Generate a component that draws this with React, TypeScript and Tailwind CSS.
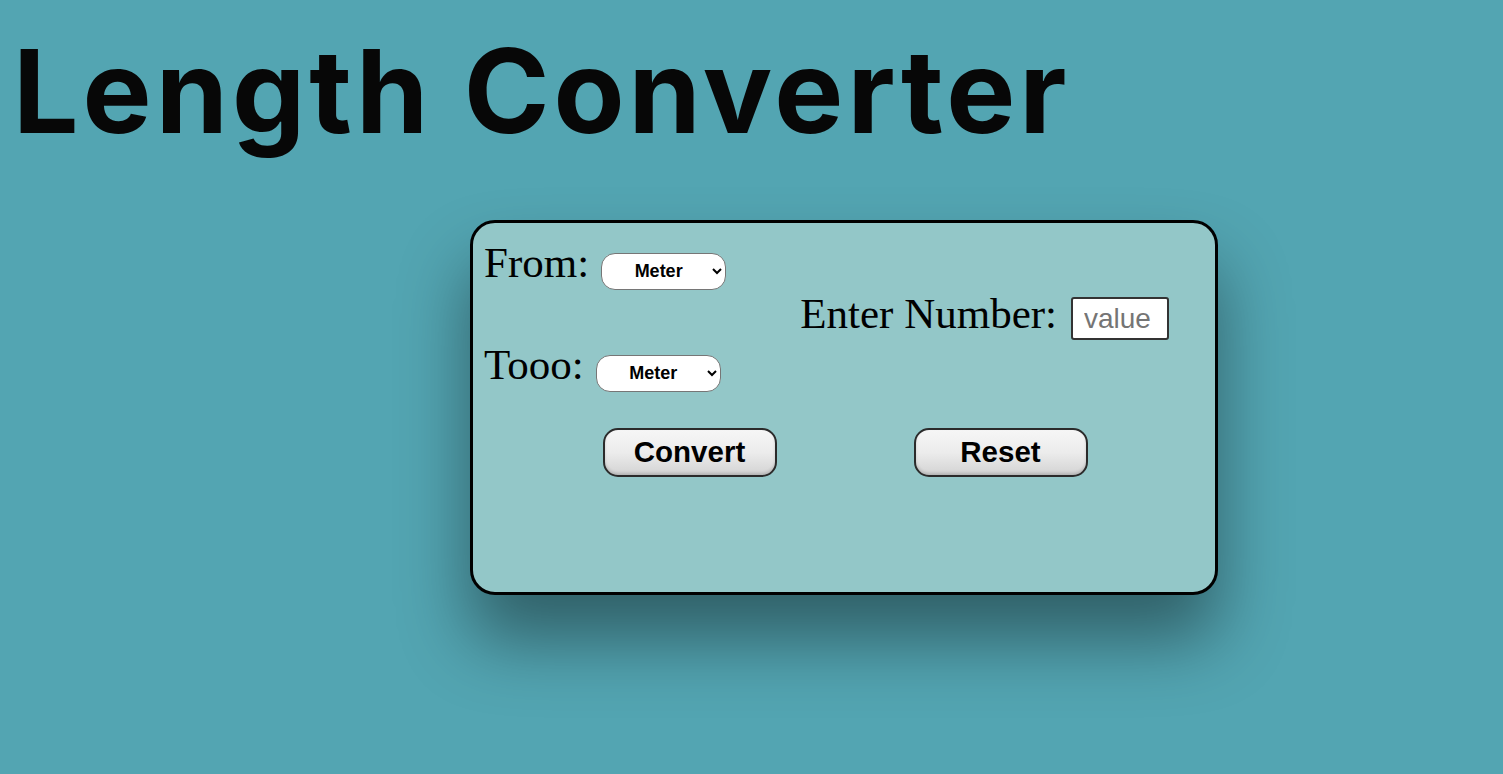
import { useState } from 'react';

const units = ['Meter', 'Kilometer', 'Centimeter', 'Millimeter', 'Mile', 'Yard', 'Foot', 'Inch'];

export default function App() {
    const [from, setFrom] = useState('Meter');
    const [to, setTo] = useState('Meter');
    const [value, setValue] = useState('');

    const selectClass =
        "ml-[12px] h-[37px] w-[125px] rounded-[14px] border border-[#767676] bg-white pl-[2px] text-center text-[18px] font-bold text-black [font-family:'Liberation_Sans',Arial,sans-serif]";
    const buttonClass =
        "h-[49px] w-[174px] rounded-[15px] border-2 border-[#2b2b2b] bg-gradient-to-b from-[#f6f6f6] via-[#ececec] to-[#d3d3d3] text-[29.5px] font-bold text-black shadow-[inset_0_-2px_3px_rgba(0,0,0,0.15)] [font-family:'Liberation_Sans',Arial,sans-serif]";

    return (
        <div className="min-h-screen bg-[#53a5b2]">
            {/* Title */}
            <h1 className="m-0 pt-[33px] pl-[13px] text-[116px] font-bold leading-none tracking-[4px] text-[#070707] [font-family:Inter,sans-serif]">
                Length Converter
            </h1>

            {/* Converter card */}
            <div className="mt-[71px] ml-[470px] h-[375px] w-[748px] rounded-[25px] border-[3px] border-black bg-[#93c7c8] pt-[14px] pl-[11px] pr-[46px] shadow-[0_45px_70px_rgba(0,0,0,0.42)] [font-family:'Liberation_Serif','Times_New_Roman',serif]">
                <div className="flex h-[51px] items-baseline text-[43px] leading-[51px] text-black">
                    <span>From:</span>
                    <select className={selectClass} value={from} onChange={(e) => setFrom(e.target.value)}>
                        {units.map((u) => (
                            <option key={u}>{u}</option>
                        ))}
                    </select>
                </div>
                <div className="flex h-[51px] items-baseline justify-end text-[43px] leading-[51px] text-black">
                    <span>Enter Number:</span>
                    <input
                        type="text"
                        inputMode="decimal"
                        placeholder="value"
                        value={value}
                        onChange={(e) => setValue(e.target.value)}
                        className="ml-[14px] h-[43px] w-[98px] rounded-[3px] border-2 border-[#333] bg-white px-[11px] text-[28px] text-black placeholder:text-[#757575] [font-family:'Liberation_Sans',Arial,sans-serif]"
                    />
                </div>
                <div className="flex h-[51px] items-baseline text-[43px] leading-[51px] text-black">
                    <span>Tooo:</span>
                    <select className={selectClass} value={to} onChange={(e) => setTo(e.target.value)}>
                        {units.map((u) => (
                            <option key={u}>{u}</option>
                        ))}
                    </select>
                </div>

                {/* Buttons */}
                <div className="mt-[38px] flex justify-center gap-[137px] pl-[37px]">
                    <button className={buttonClass}>Convert</button>
                    <button className={buttonClass} onClick={() => setValue('')}>
                        Reset
                    </button>
                </div>
            </div>
        </div>
    );
}
